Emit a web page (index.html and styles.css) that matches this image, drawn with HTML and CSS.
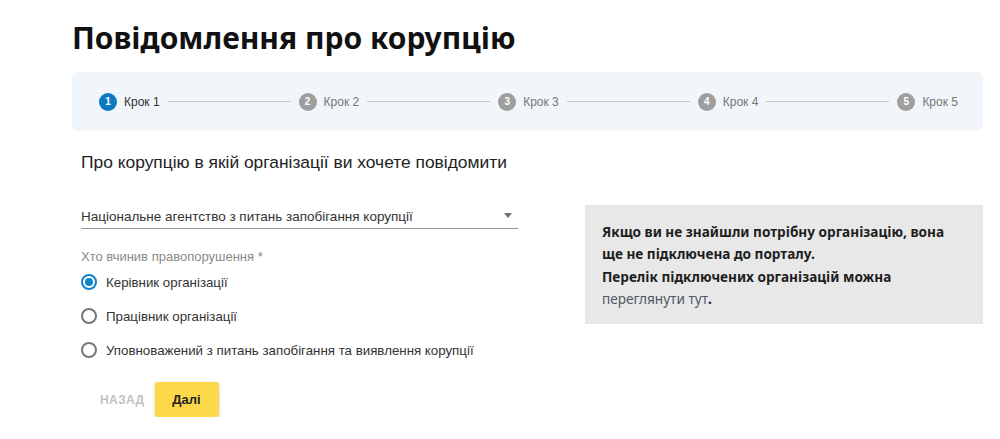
FILE: index.html
```html
<!DOCTYPE html>
<html lang="uk">
<head>
    <meta charset="UTF-8">
    <meta name="viewport" content="width=device-width, initial-scale=1.0">
    <title>Повідомлення про корупцію</title>
    <link rel="stylesheet" href="styles.css">
</head>
<body>
    <div class="page">
        <h1>Повідомлення про корупцію</h1>

        <div class="stepper">
            <div class="step active"><span class="step-num">1</span><span class="step-label">Крок 1</span></div>
            <div class="step-line"></div>
            <div class="step"><span class="step-num">2</span><span class="step-label">Крок 2</span></div>
            <div class="step-line"></div>
            <div class="step"><span class="step-num">3</span><span class="step-label">Крок 3</span></div>
            <div class="step-line"></div>
            <div class="step"><span class="step-num">4</span><span class="step-label">Крок 4</span></div>
            <div class="step-line"></div>
            <div class="step"><span class="step-num">5</span><span class="step-label">Крок 5</span></div>
        </div>

        <div class="form-row">
            <div class="form-col">
                <h2 class="form-title">Про корупцію в якій організації ви хочете повідомити</h2>

                <div class="select-field">
                    <span class="select-value">Національне агентство з питань запобігання корупції</span>
                    <span class="select-arrow"></span>
                </div>

                <div class="radio-group">
                    <div class="radio-legend">Хто вчинив правопорушення *</div>
                    <label class="radio-row">
                        <input type="radio" name="who" checked>
                        <span class="radio-mark"></span>
                        <span>Керівник організації</span>
                    </label>
                    <label class="radio-row">
                        <input type="radio" name="who">
                        <span class="radio-mark"></span>
                        <span>Працівник організації</span>
                    </label>
                    <label class="radio-row">
                        <input type="radio" name="who">
                        <span class="radio-mark"></span>
                        <span>Уповноважений з питань запобігання та виявлення корупції</span>
                    </label>
                </div>

                <div class="actions">
                    <button type="button" class="btn-back" disabled>Назад</button>
                    <button type="button" class="btn-next">Далі</button>
                </div>
            </div>

            <div class="info-box">
                <p>Якщо ви не знайшли потрібну організацію, вона<br>
                ще не підключена до порталу.<br>
                Перелік підключених організацій можна<br>
                <a href="#">переглянути тут</a>.</p>
            </div>
        </div>
    </div>
</body>
</html>
```

FILE: styles.css
```css
body {
    margin: 0;
    padding: 0;
    background-color: #fff;
    font-family: "Liberation Sans", Arial, sans-serif;
    color: #222;
}
.page {
    width: 911px;
    margin-left: 72px;
}
h1 {
    margin: 0;
    padding-top: 18px;
    font-family: "Noto Sans", sans-serif;
    font-size: 30px;
    line-height: 40px;
    font-weight: 700;
    color: #111;
}

/* stepper */
.stepper {
    display: flex;
    align-items: center;
    height: 59px;
    margin-top: 14px;
    padding: 0 25px 0 27px;
    background-color: #f0f6fa;
    border-radius: 6px;
}
.step {
    display: flex;
    align-items: center;
}
.step-num {
    width: 18px;
    height: 18px;
    border-radius: 50%;
    background-color: #9e9e9e;
    color: #fff;
    font-size: 10px;
    font-weight: bold;
    line-height: 18px;
    text-align: center;
}
.step.active .step-num {
    background-color: #0b7ac0;
}
.step-label {
    margin-left: 7px;
    font-size: 12px;
    color: #777;
}
.step.active .step-label {
    color: #333;
}
.step-line {
    flex: 1;
    height: 1px;
    margin: 0 8px;
    background-color: #c8c8c8;
}

/* form */
.form-row {
    display: flex;
    align-items: flex-start;
}
.form-col {
    width: 437px;
    margin-left: 9px;
}
.form-title {
    margin: 21px 0 0;
    font-size: 17.4px;
    line-height: 20px;
    font-weight: normal;
    color: #222;
}
.select-field {
    position: relative;
    display: flex;
    align-items: center;
    height: 23px;
    margin-top: 33px;
    border-bottom: 1px solid #949494;
}
.select-value {
    font-size: 13.5px;
    color: #333;
}
.select-arrow {
    position: absolute;
    right: 6px;
    top: 8px;
    border-left: 4px solid transparent;
    border-right: 4px solid transparent;
    border-top: 5px solid #707070;
}
.radio-group {
    margin-top: 20px;
}
.radio-legend {
    height: 16px;
    font-size: 13px;
    line-height: 16px;
    color: #8a8a8a;
}
.radio-row {
    display: flex;
    align-items: center;
    height: 34px;
    font-size: 13.3px;
    color: #333;
    cursor: pointer;
}
.radio-row input {
    display: none;
}
.radio-mark {
    position: relative;
    width: 12px;
    height: 12px;
    margin-right: 9px;
    border: 2px solid #777;
    border-radius: 50%;
}
.radio-row input:checked + .radio-mark {
    border-color: #1282c6;
}
.radio-row input:checked + .radio-mark::after {
    content: "";
    position: absolute;
    left: 2px;
    top: 2px;
    width: 8px;
    height: 8px;
    border-radius: 50%;
    background-color: #1282c6;
}
.actions {
    display: flex;
    align-items: center;
    margin-top: 15px;
    margin-left: 7px;
}
.btn-back {
    height: 35px;
    padding: 0 10px 0 12px;
    border: none;
    background: none;
    font-family: "Liberation Sans", Arial, sans-serif;
    font-size: 12px;
    font-weight: bold;
    letter-spacing: 0.4px;
    text-transform: uppercase;
    color: #c2c2c2;
}
.btn-next {
    width: 64px;
    height: 35px;
    margin-left: 0;
    border: none;
    border-radius: 3px;
    background-color: #fdd94a;
    box-shadow: 0 1px 3px rgba(0, 0, 0, 0.25);
    font-family: "Liberation Sans", Arial, sans-serif;
    font-size: 13px;
    font-weight: bold;
    color: #222;
    cursor: pointer;
}

/* info */
.info-box {
    width: 364px;
    margin-top: 74px;
    margin-left: 67px;
    padding: 16px 17px 14px;
    background-color: #e8e8e8;
}
.info-box p {
    margin: 0;
    font-family: "Noto Sans", sans-serif;
    font-size: 13.6px;
    line-height: 22.3px;
    font-weight: 700;
    color: #1e1e1e;
}
.info-box a {
    font-weight: normal;
    color: #4d5966;
    text-decoration: none;
}
```
